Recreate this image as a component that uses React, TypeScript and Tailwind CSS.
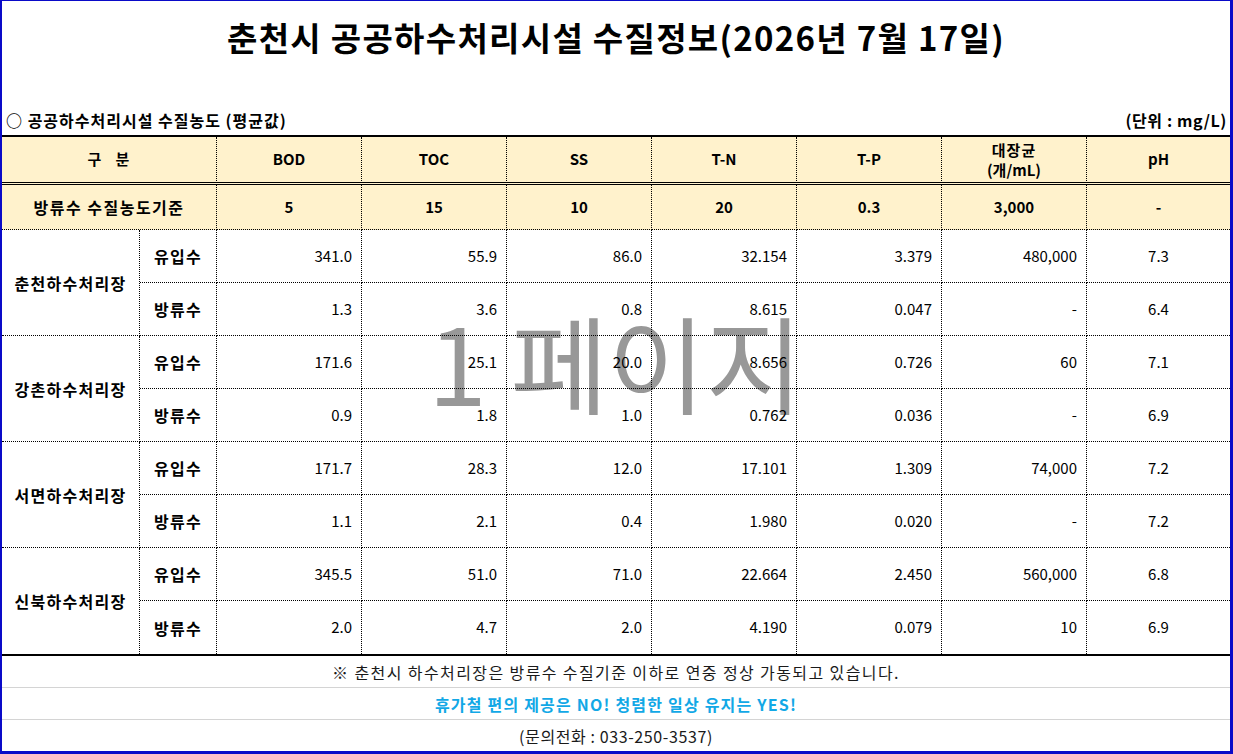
import React from 'react'

type Row = {
  name: string
  inflow: string[]
  outflow: string[]
}

const rows: Row[] = [
  {
    name: '춘천하수처리장',
    inflow: ['341.0', '55.9', '86.0', '32.154', '3.379', '480,000', '7.3'],
    outflow: ['1.3', '3.6', '0.8', '8.615', '0.047', '-', '6.4'],
  },
  {
    name: '강촌하수처리장',
    inflow: ['171.6', '25.1', '20.0', '8.656', '0.726', '60', '7.1'],
    outflow: ['0.9', '1.8', '1.0', '0.762', '0.036', '-', '6.9'],
  },
  {
    name: '서면하수처리장',
    inflow: ['171.7', '28.3', '12.0', '17.101', '1.309', '74,000', '7.2'],
    outflow: ['1.1', '2.1', '0.4', '1.980', '0.020', '-', '7.2'],
  },
  {
    name: '신북하수처리장',
    inflow: ['345.5', '51.0', '71.0', '22.664', '2.450', '560,000', '6.8'],
    outflow: ['2.0', '4.7', '2.0', '4.190', '0.079', '10', '6.9'],
  },
]

const standards = ['5', '15', '10', '20', '0.3', '3,000', '-']

const font = { fontFamily: '"Noto Sans CJK KR", "Noto Sans", sans-serif' }

// header cells: dotted divider on the right, double rule underneath
const headCell =
  'h-[48px] flex items-center justify-center bg-[#fff2cc] font-bold text-[15px] border-b-[3px] border-black [border-bottom-style:double]'

function ValueCells({ values, last }: { values: string[]; last: boolean }) {
  return (
    <>
      {values.map((v, i) => {
        const isPh = i === values.length - 1
        return (
          <div
            key={i}
            className={`h-[53px] flex items-center text-[15px] ${
              isPh ? 'justify-center' : 'justify-end pr-[9px] border-r border-dotted border-black'
            } ${last ? '' : 'border-b border-dotted border-black'}`}
          >
            {v}
          </div>
        )
      })}
    </>
  )
}

export default function App() {
  return (
    <div
      className="relative w-[1233px] h-[754px] bg-white text-black border-t border-l-2 border-r-[3px] border-b-[3px] border-[#0a0ac8] overflow-hidden"
      style={font}
    >
      {/* watermark sits behind the grid */}
      <div className="absolute left-[426px] top-[306px] text-[106px] leading-none text-[#989898] whitespace-pre pointer-events-none">
        1 페이지
      </div>

      <div className="relative">
        <div className="h-[74px] flex items-center justify-center">
          <h1 className="text-[33px] font-bold tracking-[1.3px]">
            춘천시 공공하수처리시설 수질정보(2026년 7월 17일)
          </h1>
        </div>
        <div className="h-[30px]" />
        <div className="h-[30px] flex items-center justify-between pl-[4px] pr-[3px] text-[16px] font-bold">
          <span className="tracking-[1px]">○ 공공하수처리시설 수질농도 (평균값)</span>
          <span className="tracking-[0.6px]">(단위 : mg/L)</span>
        </div>

        <div className="grid grid-cols-[138px_77px_145px_145px_145px_145px_145px_145px_1fr] border-t-2 border-black">
          {/* header */}
          <div className={`col-span-2 border-r [border-right-style:dotted] ${headCell}`}>
            <span className="tracking-[1px]">구&nbsp;&nbsp;&nbsp;분</span>
          </div>
          {['BOD', 'TOC', 'SS', 'T-N', 'T-P'].map((h) => (
            <div key={h} className={`border-r [border-right-style:dotted] ${headCell}`}>
              {h}
            </div>
          ))}
          <div className={`flex-col leading-[20px] border-r [border-right-style:dotted] ${headCell}`}>
            <span className="tracking-[1px]">대장균</span>
            <span>(개/mL)</span>
          </div>
          <div className={headCell}>pH</div>

          {/* discharge standard */}
          <div className="col-span-2 h-[45px] flex items-center justify-center bg-[#fff2cc] font-bold text-[16px] tracking-[1.5px] border-r border-b border-dotted border-black">
            방류수 수질농도기준
          </div>
          {standards.map((s, i) => (
            <div
              key={i}
              className={`h-[45px] flex items-center justify-center bg-[#fff2cc] font-bold text-[15px] border-b border-dotted border-black ${
                i < standards.length - 1 ? 'border-r' : ''
              }`}
            >
              {s}
            </div>
          ))}

          {rows.map((r, idx) => {
            const last = idx === rows.length - 1
            return (
              <React.Fragment key={r.name}>
                <div
                  className={`row-span-2 flex items-center justify-center font-bold text-[16px] tracking-[1.3px] border-r border-dotted border-black ${
                    last ? '' : 'border-b'
                  }`}
                >
                  {r.name}
                </div>
                <div className="h-[53px] flex items-center justify-center font-bold text-[16px] tracking-[1.2px] border-r border-b border-dotted border-black">
                  유입수
                </div>
                <ValueCells values={r.inflow} last={false} />
                <div
                  className={`h-[53px] flex items-center justify-center font-bold text-[16px] tracking-[1.2px] border-r border-dotted border-black ${
                    last ? '' : 'border-b'
                  }`}
                >
                  방류수
                </div>
                <ValueCells values={r.outflow} last={last} />
              </React.Fragment>
            )
          })}
        </div>

        <div className="border-t-2 border-black text-[16px]">
          <div className="h-[32px] flex items-center justify-center text-[#1a1a1a] tracking-[1.4px] border-b border-[#d4d4d4]">
            ※ 춘천시 하수처리장은 방류수 수질기준 이하로 연중 정상 가동되고 있습니다.
          </div>
          <div className="h-[32px] flex items-center justify-center font-bold text-[#12a8e6] tracking-[1.2px] border-b border-[#d4d4d4]">
            휴가철 편의 제공은 NO! 청렴한 일상 유지는 YES!
          </div>
          <div className="h-[31px] flex items-center justify-center text-[#1a1a1a] tracking-[0.6px]">
            (문의전화 : 033-250-3537)
          </div>
        </div>
      </div>
    </div>
  )
}
